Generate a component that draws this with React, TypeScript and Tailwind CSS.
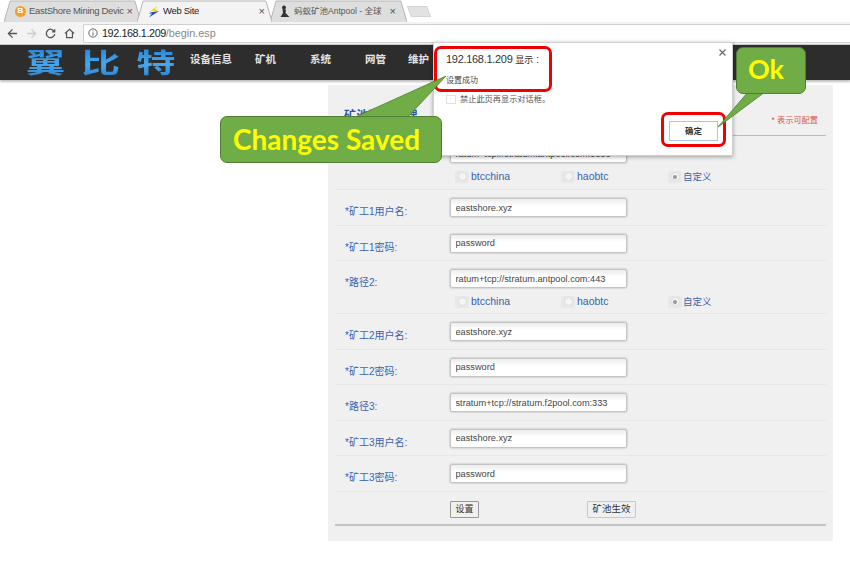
import React from "react";

const FONT = "font-['Liberation_Sans','Noto_Sans_CJK_SC',sans-serif]";

function TabShape({ active }: { active?: boolean }) {
  return (
    <svg className="absolute inset-0 h-full w-full" viewBox="0 0 100 22" preserveAspectRatio="none" aria-hidden>
      <polygon points="0,22 4.5,1 95.5,1 100,22" fill={active ? "#f3f3f3" : "#dedede"} />
      <polyline
        points="0,22 4.5,1 95.5,1 100,22"
        fill="none"
        stroke="#b5b5b5"
        strokeWidth="1"
        vectorEffect="non-scaling-stroke"
      />
    </svg>
  );
}

function BitcoinIcon() {
  return (
    <span className="flex h-[11px] w-[11px] shrink-0 items-center justify-center rounded-full bg-[#f0a030] text-[8px] font-bold text-white">
      B
    </span>
  );
}

function BoltIcon() {
  return (
    <svg width="12" height="13" viewBox="0 0 12 13" className="shrink-0" aria-hidden>
      <path d="M1 7.5 L9.5 0.5 L6.5 4.5 L10.5 4.5 L9 5.5 L3.5 6 Z" fill="#f2c81e" />
      <path d="M11 6 L1 12.5 L4 8.5 L1 8.5 L3 7.2 Z" fill="#1f4fc4" />
    </svg>
  );
}

function AntIcon() {
  return (
    <svg width="12" height="13" viewBox="0 0 12 13" className="shrink-0" aria-hidden>
      <circle cx="5" cy="2.5" r="2" fill="#333" />
      <path d="M3.5 4 L7 4.5 L6.5 8 L10.5 12 L1.5 12 L4 8 Z" fill="#333" />
    </svg>
  );
}

function Tab({
  width,
  active,
  icon,
  title,
  titleClass,
  padding,
}: {
  width: string;
  active?: boolean;
  icon: React.ReactNode;
  title: string;
  titleClass: string;
  padding: string;
}) {
  return (
    <div className={`relative flex h-[22px] items-center ${width} ${active ? "z-10" : ""}`}>
      <TabShape active={active} />
      <div className={`relative flex w-full items-center gap-[3px] ${padding}`}>
        {icon}
        <span className={`flex-1 overflow-hidden whitespace-nowrap leading-[14px] ${titleClass}`}>{title}</span>
        <span className="text-[11px] leading-none text-[#555]">×</span>
      </div>
    </div>
  );
}

function TabBar() {
  return (
    <div className="relative z-10 -mb-px flex h-[22px] items-end bg-white pl-[4px]">
      <Tab
        width="w-[137px]"
        padding="pl-[11px] pr-[8px]"
        icon={<BitcoinIcon />}
        title="EastShore Mining Devic"
        titleClass="text-[9.5px] tracking-[-0.3px] text-[#555]"
      />
      <div className="-ml-[4px]">
        <Tab
          width="w-[135px]"
          active
          padding="pl-[11px] pr-[7px]"
          icon={<BoltIcon />}
          title="Web Site"
          titleClass="text-[9.5px] tracking-[-0.3px] text-[#222]"
        />
      </div>
      <div className="-ml-[2px]">
        <Tab
          width="w-[137px]"
          padding="pl-[9px] pr-[11px]"
          icon={<AntIcon />}
          title="蚂蚁矿池Antpool - 全球"
          titleClass="text-[8.5px] text-[#555]"
        />
      </div>
      <div className="mb-[5px] ml-[2px] h-[11px] w-[20px] skew-x-[20deg] border border-[#d4d4d4] bg-[#e2e2e2]" />
    </div>
  );
}

function Toolbar() {
  return (
    <div className="flex h-[24px] items-center border-y border-[#c8c8c8] bg-[#f3f3f3]">
      <div className="flex w-[83px] shrink-0 items-center gap-[8px] pl-[7px]">
        <svg width="11" height="11" viewBox="0 0 12 12" fill="none" stroke="#555" strokeWidth="1.4" aria-hidden>
          <path d="M11 6H1.5M6 1.5 1.5 6 6 10.5" />
        </svg>
        <svg width="11" height="11" viewBox="0 0 12 12" fill="none" stroke="#ccc" strokeWidth="1.4" aria-hidden>
          <path d="M1 6h9.5M6 1.5 10.5 6 6 10.5" />
        </svg>
        <svg width="11" height="11" viewBox="0 0 12 12" fill="none" stroke="#555" strokeWidth="1.4" aria-hidden>
          <path d="M10.2 4A4.6 4.6 0 1 0 10.6 6.5M10.6 1.3V4.2H7.7" />
        </svg>
        <svg width="11" height="11" viewBox="0 0 12 12" fill="none" stroke="#555" strokeWidth="1.3" aria-hidden>
          <path d="M1 6 6 1.4 11 6M2.8 5V10.5H9.2V5" />
        </svg>
      </div>
      <div className="flex h-[19px] flex-1 items-center gap-[4px] rounded-l-[2px] border border-r-0 border-[#d0d0d0] bg-white pl-[4px]">
        <svg width="10" height="10" viewBox="0 0 12 12" fill="none" stroke="#555" strokeWidth="1.1" aria-hidden>
          <circle cx="6" cy="6" r="5" />
          <path d="M6 5.2V9M6 3V4" />
        </svg>
        <span className="text-[10.8px] tracking-[-0.4px] text-[#222]">
          192.168.1.209<span className="tracking-normal text-[#888]">/begin.esp</span>
        </span>
      </div>
    </div>
  );
}

function Header() {
  const items = [
    { t: "设备信息", w: "w-[65px]" },
    { t: "矿机", w: "w-[55px]" },
    { t: "系统", w: "w-[55px]" },
    { t: "网管", w: "w-[43px]" },
    { t: "维护", w: "w-[40px]" },
  ];
  return (
    <div className="flex h-[35px] items-center bg-[#2d2d2d] shadow-[0_2px_2px_rgba(0,0,0,0.25)]">
      <div className="w-[190px] shrink-0 pl-[26px] pt-[3px]">
        <span className="block w-[114px] origin-left scale-x-[1.45] whitespace-nowrap bg-gradient-to-b from-[#2a88d8] via-[#45a8ee] to-[#2a78c8] bg-clip-text text-[27px] font-bold leading-[31px] tracking-[11px] text-transparent">
          翼比特
        </span>
      </div>
      {items.map((i) => (
        <span key={i.t} className={`${i.w} shrink-0 pb-[5px] text-[10.5px] font-bold text-[#e4e4e4]`}>
          {i.t}
        </span>
      ))}
    </div>
  );
}

function Radio({ checked, label, width, cjk }: { checked?: boolean; label: string; width: string; cjk?: boolean }) {
  return (
    <div className={`flex items-center ${width}`}>
      <span className="flex h-[12px] w-[14px] items-center justify-center rounded-[2px] bg-[#e8e8e8]">
        <span className="flex h-[9px] w-[9px] items-center justify-center rounded-full border border-[#ddd] bg-[#f5f5f5]">
          {checked && <span className="h-[4px] w-[4px] rounded-full bg-[#999]" />}
        </span>
      </span>
      <span className={`text-[#3a62ae] ${cjk ? "ml-[1px] text-[9.5px]" : "ml-[2px] text-[10.5px]"}`}>{label}</span>
    </div>
  );
}

function Field({ label, value, radios, tall }: { label: string; value: string; radios?: boolean; tall?: boolean }) {
  return (
    <div className={`flex border-b border-[#e6e6e6] pt-[8px] ${radios ? (tall ? "h-[54px]" : "h-[53px]") : "h-[35.5px]"}`}>
      <div className="w-[115px] shrink-0 pl-[10px] pt-[7px] text-[10px] leading-[14px] text-[#3a62ae]">{label}</div>
      <div className="flex flex-col">
        <input
          readOnly
          value={value}
          className="h-[19px] w-[177px] rounded-[2px] border border-[#c4c4c4] bg-gradient-to-b from-[#ececec] to-white to-40% px-[4.5px] text-[9.2px] text-[#444] shadow-[0_0_2px_rgba(0,0,0,0.35)] outline-none"
        />
        {radios && (
          <div className="mt-[6px] flex pl-[5px]">
            <Radio label="btcchina" width="w-[106px]" />
            <Radio label="haobtc" width="w-[107px]" />
            <Radio label="自定义" checked cjk width="w-[60px]" />
          </div>
        )}
      </div>
    </div>
  );
}

function Panel() {
  return (
    <div className="ml-[328px] mt-[5px] h-[456px] w-[505px] bg-[#f0f0f0] px-[7px]">
      <div className="flex h-[51px] items-start justify-between border-b border-[#bdbdbd] pr-[8px]">
        <span className="pl-[9px] pt-[22px] text-[12px] font-bold tracking-[0.3px] text-[#2f55a8]">矿池配置管理</span>
        <span className="pt-[30px] text-[8.2px] text-[#d9534f]">* 表示可配置</span>
      </div>
      <Field label="*路径1:" value="ratum+tcp://stratum.antpool.com:3333" radios tall />
      <Field label="*矿工1用户名:" value="eastshore.xyz" />
      <Field label="*矿工1密码:" value="password" />
      <Field label="*路径2:" value="ratum+tcp://stratum.antpool.com:443" radios />
      <Field label="*矿工2用户名:" value="eastshore.xyz" />
      <Field label="*矿工2密码:" value="password" />
      <Field label="*路径3:" value="stratum+tcp://stratum.f2pool.com:333" />
      <Field label="*矿工3用户名:" value="eastshore.xyz" />
      <Field label="*矿工3密码:" value="password" />
      <div className="flex h-[34px] items-start border-b-2 border-[#c4c4c4] pl-[115px] pt-[9px]">
        <button className="h-[17px] w-[29px] rounded-[1px] border border-[#999] bg-[#f0f0f0] text-[9px] leading-none text-[#333]">
          设置
        </button>
        <button className="ml-[108px] h-[17px] w-[49px] rounded-[1px] border border-[#c8c8c8] bg-[#f0f0f0] text-[9.5px] leading-none text-[#333]">
          矿池生效
        </button>
      </div>
    </div>
  );
}

function Dialog() {
  return (
    <div className="absolute left-[433px] top-[42px] h-[114px] w-[300px] border border-[#d0d0d0] bg-white pl-[12px] pt-[9px] shadow-[0_1px_4px_rgba(0,0,0,0.35)]">
      <div className="text-[11px] leading-[14px] tracking-[-0.3px] text-[#333]">
        192.168.1.209 <span className="text-[9px] tracking-normal">显示</span> :
      </div>
      <div className="mt-[8px] text-[8px] leading-[11px] text-[#444]">设置成功</div>
      <div className="mt-[8px] flex items-center gap-[4px]">
        <span className="h-[9px] w-[10px] border border-[#e0e0e0] bg-white" />
        <span className="text-[8.2px] leading-[11px] text-[#555]">禁止此页再显示对话框。</span>
      </div>
      <svg className="absolute right-[6px] top-[6px]" width="7" height="7" viewBox="0 0 7 7" stroke="#666" strokeWidth="1.1" aria-hidden>
        <path d="M0.5 0.5 6.5 6.5M6.5 0.5 0.5 6.5" />
      </svg>
      <button className="absolute right-[14px] top-[78px] h-[20px] w-[49px] border border-[#a9c7ee] bg-white text-[8.5px] font-bold text-[#333]">
        确定
      </button>
    </div>
  );
}

function Overlays() {
  return (
    <>
      <div className="absolute left-[434px] top-[46px] h-[46px] w-[118px] rounded-[7px] border-[3px] border-[#f00000]" />
      <div className="absolute left-[661px] top-[112px] h-[35px] w-[65px] rounded-[7px] border-[3px] border-[#f00000]" />
      <svg className="absolute left-0 top-0" width="850" height="562" viewBox="0 0 850 562" aria-hidden>
        <polygon points="446,76 353,118 407,118" fill="#70ad47" stroke="#507e32" strokeWidth="0.8" />
        <polygon points="718,127 748,92 765,92" fill="#70ad47" stroke="#507e32" strokeWidth="0.8" />
      </svg>
      <div className="absolute left-[220px] top-[116px] flex h-[47px] w-[222px] items-center rounded-[7px] border border-[#507e32] bg-[#70ad47] pb-[2px] pl-[12px] font-['Lato',sans-serif] text-[28px] font-bold text-[#ffff00]">
        Changes Saved
      </div>
      <div className="absolute left-[736px] top-[47px] flex h-[47px] w-[70px] items-center justify-center rounded-[7px] border border-[#507e32] bg-[#70ad47] pb-[2px] pr-[10px] font-['Lato',sans-serif] text-[27px] font-bold text-[#ffff00]">
        Ok
      </div>
    </>
  );
}

export default function App() {
  return (
    <div className={`relative h-[562px] w-[850px] overflow-hidden bg-white ${FONT}`}>
      <TabBar />
      <Toolbar />
      <Header />
      <Panel />
      <Dialog />
      <Overlays />
    </div>
  );
}
